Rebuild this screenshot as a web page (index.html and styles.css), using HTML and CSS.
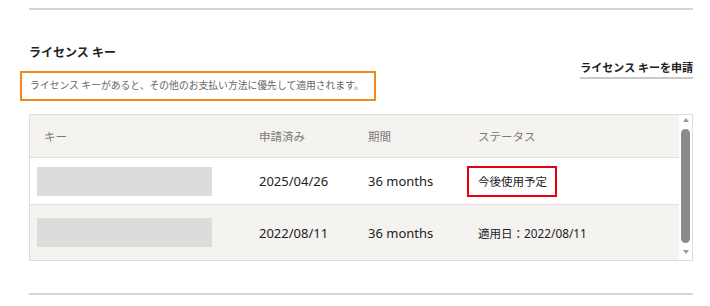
FILE: index.html
```html
<!DOCTYPE html>
<html lang="ja">
<head>
<meta charset="utf-8">
<link rel="stylesheet" href="styles.css">
</head>
<body>
<div class="page">
  <div class="rule"></div>
  <div class="section-head">
    <div class="intro">
      <h2 class="title">ライセンス キー</h2>
      <p class="desc">ライセンス キーがあると、その他のお支払い方法に優先して適用されます。</p>
    </div>
    <a class="apply-link">ライセンス キーを申請</a>
  </div>
  <div class="table-wrap">
    <div class="grid">
      <div class="row head">
        <div class="cell key-label">キー</div>
        <div class="cell">申請済み</div>
        <div class="cell">期間</div>
        <div class="cell">ステータス</div>
      </div>
      <div class="row body">
        <div class="cell keycell"><span class="placeholder"></span></div>
        <div class="cell date">2025/04/26</div>
        <div class="cell date">36 months</div>
        <div class="cell status"><span class="status-flag">今後使用予定</span></div>
      </div>
      <div class="row body alt">
        <div class="cell keycell"><span class="placeholder"></span></div>
        <div class="cell date">2022/08/11</div>
        <div class="cell date">36 months</div>
        <div class="cell status">適用日：<span class="num">2022/08/11</span></div>
      </div>
    </div>
    <div class="scrollbar">
      <span class="arrow up"></span>
      <span class="thumb"></span>
      <span class="arrow down"></span>
    </div>
  </div>
  <div class="rule bottom"></div>
</div>
</body>
</html>
```

FILE: styles.css
```css
* { box-sizing: border-box; }
html, body { margin: 0; padding: 0; background: #fff; }
body {
  font-family: "Noto Sans", "Noto Sans CJK JP", sans-serif;
  color: #222;
}
.page {
  width: 693px;
  padding: 8px 0 0 29px;
}
.rule {
  height: 2px;
  background: #d6d2ce;
}
.rule.bottom {
  margin-top: 32px;
  background: #d9d5d1;
}
.section-head {
  display: flex;
  justify-content: space-between;
  align-items: flex-start;
  margin-top: 35px;
}
.title {
  margin: 0;
  font-size: 12px;
  line-height: 16px;
  font-weight: 700;
  color: #222;
}
.desc {
  margin: 10px 0 0 -9px;
  display: inline-block;
  border: 2px solid #f5861f;
  padding: 0 10px 0 8px;
  font-size: 9.8px;
  line-height: 26px;
  color: #666;
  white-space: nowrap;
}
.apply-link {
  margin-top: 15px;
  font-size: 11px;
  line-height: 15px;
  font-weight: 700;
  color: #222;
  padding-bottom: 2px;
  border-bottom: 2px solid #ccc8c4;
  white-space: nowrap;
}
.table-wrap {
  margin-top: 13px;
  width: 664px;
  height: 147px;
  border: 1px solid #e0ddd9;
  display: flex;
  overflow: hidden;
}
.grid {
  flex: 1;
  display: flex;
  flex-direction: column;
}
.row {
  display: grid;
  grid-template-columns: 229px 109px 110px 1fr;
  align-items: center;
  border-bottom: 1px solid #e3e0dc;
}
.row.head {
  height: 43px;
  background: #f5f3f0;
  font-size: 11.5px;
  color: #7a7a7a;
}
.row.body {
  height: 47px;
  background: #fff;
  font-size: 13px;
}
.row.body.alt {
  height: 55px;
  background: #f5f3f0;
  border-bottom: none;
}
.key-label { padding-left: 14px; }
.keycell { padding-left: 7px; display: flex; }
.placeholder {
  display: block;
  width: 175px;
  height: 29px;
  background: #dcdcdc;
}
.status { font-size: 11.5px; }
.status .num { font-size: 11.8px; }
.status-flag {
  display: inline-block;
  margin-left: -11px;
  border: 2px solid #e8000b;
  padding: 0 8px 0 9px;
  line-height: 27px;
}
.scrollbar {
  width: 13px;
  background: #fff;
  display: flex;
  flex-direction: column;
  align-items: center;
  padding-top: 3px;
}
.arrow {
  width: 0;
  height: 0;
  border-left: 3.5px solid transparent;
  border-right: 3.5px solid transparent;
}
.arrow.up { border-bottom: 4px solid #999; }
.arrow.down { border-top: 4px solid #999; }
.thumb {
  width: 9px;
  height: 114px;
  margin: 7px 0;
  border-radius: 5px;
  background: #8a8a8a;
}
```
